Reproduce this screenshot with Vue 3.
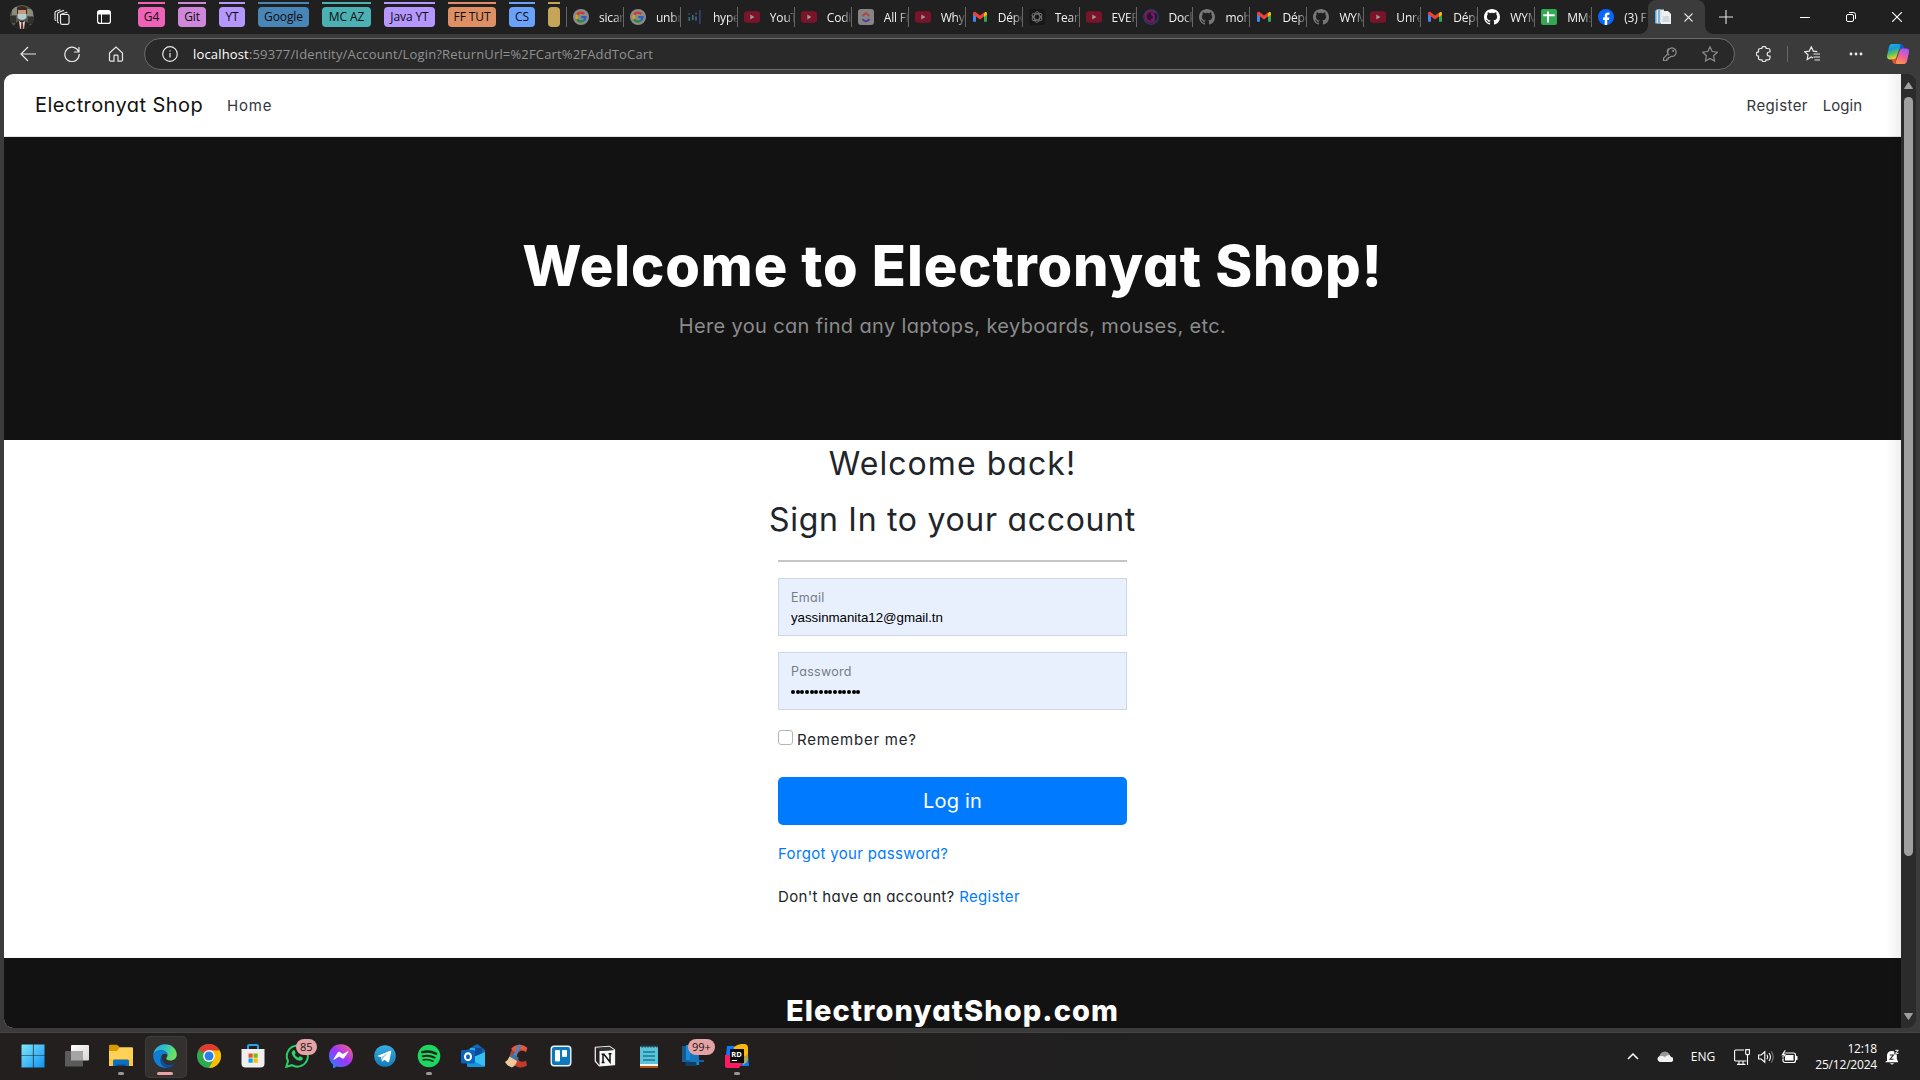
<script setup>
const groups = [
  { name: 'G4', color: '#f062b8', width: 27, gap: 13 },
  { name: 'Git', color: '#cf87da', width: 28, gap: 13 },
  { name: 'YT', color: '#b697ff', width: 26, gap: 13 },
  { name: 'Google', color: '#4986b8', width: 51, gap: 13 },
  { name: 'MC AZ', color: '#4bb1b4', width: 49, gap: 13 },
  { name: 'Java YT', color: '#b697ff', width: 51, gap: 13 },
  { name: 'FF TUT', color: '#df8f64', width: 48, gap: 13 },
  { name: 'CS', color: '#6aa1fa', width: 26, gap: 13 },
  { name: '', color: '#c4a55a', width: 12, gap: 6 },
]

const icons = {
  google: '<circle cx="8" cy="8" r="8" fill="#8b8b8b"/><g fill="none" stroke-width="2.3"><path d="M11.2 4.9A4.5 4.5 0 0 0 4.1 5.8" stroke="#d0392e"/><path d="M4.1 5.8a4.5 4.5 0 0 0 0 4.4" stroke="#dca30c"/><path d="M4.1 10.2a4.5 4.5 0 0 0 6.9 1.2" stroke="#268a42"/><path d="M11 11.4A4.5 4.5 0 0 0 12.5 8.2H8.2" stroke="#2b5fc0"/></g>',
  hyper: '<g><rect x="1.5" y="4" width="1.6" height="2" fill="#265462"/><rect x="1.5" y="8" width="1.6" height="4" fill="#31707e"/><rect x="5" y="6" width="1.6" height="5" fill="#367785"/><rect x="8" y="3.5" width="2" height="2" fill="#34496d"/><rect x="8" y="7.5" width="2" height="4" fill="#3e5789"/><rect x="12" y="1" width="1.7" height="14" fill="#38406e"/></g>',
  youtube: '<rect y="2.3" width="16" height="11.4" rx="3" fill="#7b1429"/><path d="M6.3 5.6 10.4 8 6.3 10.4z" fill="#999"/>',
  clickup: '<rect width="16" height="16" rx="3" fill="#858585"/><path d="M4.5 7 8 4l3.5 3" fill="none" stroke="#b2453d" stroke-width="1.8"/><path d="M4.4 10.2q3.6 4 7.2 0" fill="none" stroke="#553ba5" stroke-width="2"/>',
  gmail: '<path d="M1 4.5v8.3h3V6.8z" fill="#4285f4"/><path d="M12 6.8v6h3V4.5z" fill="#34a853"/><path d="M12 4.2 13 3q2-.5 2 1.200v1.500l-3 2.200z" fill="#fbbc04"/><path d="M1 5.2V3.7Q2 2.2 3.5 3L8 6.4 12 3.4v4L8 10.4z" fill="#ea4335"/>',
  gpt: '<rect width="16" height="16" rx="3" fill="#171717"/><g fill="none" stroke="#777" stroke-width=".9"><ellipse cx="8" cy="8" rx="2.8" ry="5.4"/><ellipse cx="8" cy="8" rx="2.8" ry="5.4" transform="rotate(60 8 8)"/><ellipse cx="8" cy="8" rx="2.8" ry="5.4" transform="rotate(120 8 8)"/></g>',
  docs: '<circle cx="8" cy="8" r="7.200" fill="#2c1532" stroke="#283b76" stroke-width="1.4"/><path d="M12 4A5.4 5.4 0 1 0 12 11" fill="none" stroke="#7a1a50" stroke-width="2.4"/><path d="M8 5a3 3 0 0 1 0 6" fill="none" stroke="#722169" stroke-width="1.8"/>',
  github: '<path fill="currentColor" fill-rule="evenodd" d="M8 0C3.58 0 0 3.58 0 8c0 3.54 2.29 6.53 5.47 7.59.4.07.55-.17.55-.38 0-.19-.01-.82-.01-1.49-2.01.37-2.53-.49-2.69-.94-.09-.23-.48-.94-.82-1.13-.28-.15-.68-.52-.01-.53.63-.01 1.08.58 1.23.82.72 1.21 1.87.87 2.33.66.07-.52.28-.87.51-1.07-1.78-.2-3.64-.89-3.64-3.95 0-.87.31-1.59.82-2.15-.08-.2-.36-1.02.08-2.12 0 0 .67-.21 2.2.82a7.6 7.6 0 0 1 4 0c1.53-1.04 2.2-.82 2.2-.82.44 1.1.16 1.92.08 2.12.51.56.82 1.27.82 2.15 0 3.07-1.87 3.75-3.65 3.95.29.25.54.73.54 1.48 0 1.07-.01 1.93-.01 2.2 0 .21.15.46.55.38A8.01 8.01 0 0 0 16 8c0-4.42-3.58-8-8-8z"/>',
  sheets: '<rect width="16" height="16" rx="2" fill="#34a853"/><path d="M2.3 6.3h11.4M7 2.5v11" stroke="#fff" stroke-width="2"/>',
  facebook: '<circle cx="8" cy="8" r="8" fill="#0866ff"/><path d="M6.7 15.9v-5H5V8.5h1.7V7c0-2.4 1.2-3.6 3.3-3.6q.9 0 1.5.2v2.1h-1c-1 0-1.3.5-1.3 1.4v1.4h2.2l-.4 2.4H9.2v5z" fill="#fff"/>',
}

const tabs = [
  ['google', 'sicar'], ['google', 'unbr'], ['hyper', 'hype'], ['youtube', 'YouT'], ['youtube', 'Codi'],
  ['clickup', 'All Fi'], ['youtube', 'Why'], ['gmail', 'Dépô'], ['gpt', 'Team'], ['youtube', 'EVER'],
  ['docs', 'Dock'], ['github', 'moh'], ['gmail', 'Dépô'], ['github', 'WYM'], ['youtube', 'Unre'],
  ['gmail', 'Dépô'], ['github', 'WYM', true], ['sheets', 'MMs'], ['facebook', '(3) F'],
].map(([icon, title, lit]) => ({ icon, title, lit }))

const apps = [
  { id: 'start', art: '<defs><linearGradient id="gw" x2="1" y2="1"><stop stop-color="#7ce8fb"/><stop offset="1" stop-color="#1291f2"/></linearGradient></defs><path fill="url(#gw)" d="M1 .5h10.9v10.9H.5V1zM12.6.5h10.9v10.9H12.6zM.5 12.1h11.4V23.5H.5zM12.6 12.1h10.9v11.4H12.6z"/>' },
  { id: 'task-view', art: '<defs><linearGradient id="gt" x2="1" y2="1"><stop stop-color="#fff"/><stop offset="1" stop-color="#d6d6d6"/></linearGradient></defs><rect x="6" y="1" width="18" height="15.5" rx="1" fill="url(#gt)"/><rect x="0" y="7" width="18" height="15.5" rx="1" fill="#5b5b5b"/><path d="M6 7h11a1 1 0 0 1 1 1v8.500H6z" fill="#a5a5a5"/>' },
  { id: 'explorer', run: true, art: '<path d="M0 2q0-1.200 1.200-1.200H8L10.500 3v4H0z" fill="#d99a00"/><path d="M0 7h8l2.500-3.800H23q1 0 1 1V22H0z" fill="#ffd155"/><path d="M0 15h24v6q0 1-1 1H1q-1 0-1-1z" fill="#fdc22e" opacity=".6"/><path d="M4 22v-5q0-1.500 1.500-1.500h13Q20 15.500 20 17v5z" fill="#0f6fbe"/><path d="M7.500 20.500h9V22h-9z" fill="#0a4a86"/>' },
  { id: 'edge', active: true, art: '<defs><linearGradient id="ge" x2="1" y2=".3"><stop stop-color="#2aa6dc"/><stop offset=".5" stop-color="#2cc3c8"/><stop offset="1" stop-color="#6be35d"/></linearGradient></defs><path d="M.2 11C1 4.500 6 .2 12 .2c7 0 11.800 5 11.800 10.300 0 3.700-2.800 6-6.300 6-3 0-4.300-1.200-4.300-2 0-.7 1.300-1.200 1.300-3.500C14.500 8 11 6.200 8 6.200 4 6.200 1 8.500.2 11z" fill="url(#ge)"/><path d="M.2 11C1.300 8 4.600 6.200 8 6.200c3.300 0 6.500 2 6.500 4.800-3.500-3.400-8.200.7-6.300 6 1 2.800 3.300 5.200 6.300 6.600C7 25.200 0 19.500.2 11z" fill="#0f7fd6"/><path d="M10.200 11.800c-3 3.200.4 9.400 6.600 9.200 2 0 3.800-.8 5.200-2-1.800 3-5 5-8.500 4.800-6.500-1.500-8.400-8.800-3.300-12z" fill="#0c4f9e"/>' },
  { id: 'chrome', art: '<circle cx="12" cy="12" r="12" fill="#2da94f"/><path d="M12 12 1.600 6A12 12 0 0 1 22.400 6z" fill="#e33b2e"/><path d="M12 6.500h10.700A12 12 0 0 1 12 24l5-9z" fill="#fdbd00"/><circle cx="12" cy="12" r="5.900" fill="#fff"/><circle cx="12" cy="12" r="4.500" fill="#2b7de9"/>' },
  { id: 'store', art: '<path d="M7 5V2.200Q7 1 8.200 1h7.600Q17 1 17 2.200V5" fill="none" stroke="#21a4e8" stroke-width="2"/><path d="M.5 5h23v14.500q0 4-4 4h-15q-4 0-4-4z" fill="#efefef"/><path d="M7.500 9.500h4.200v4.200H7.500z" fill="#f25022"/><path d="M12.500 9.500h4.200v4.200h-4.200z" fill="#7fba00"/><path d="M7.500 14.500h4.200v4.200H7.500z" fill="#00a4ef"/><path d="M12.500 14.500h4.200v4.200h-4.200z" fill="#ffb900"/>' },
  { id: 'whatsapp', badge: '85', art: '<path d="M1.300 22.800 3 17A10.500 10.500 0 1 1 7 21.200z" fill="none" stroke="#25d366" stroke-width="2"/><path d="M8.500 6.200c-.6 0-1.800.9-1.800 2.500 0 2.700 4.300 8 8.200 8 1.700 0 3-1.100 3-2.300 0-.9-2.600-2.200-3.100-2.100-.6.100-1 1.400-1.500 1.400-1 0-3.500-2.500-3.500-3.200 0-.5.900-.9.900-1.500 0-.5-1-2.800-1.400-2.800z" fill="#25d366"/>' },
  { id: 'messenger', art: '<defs><linearGradient id="gm" x1="0" y1="1" x2="1" y2="0"><stop stop-color="#168bff"/><stop offset=".5" stop-color="#a033ff"/><stop offset="1" stop-color="#ff6c68"/></linearGradient></defs><path d="M12 .2c7 0 12 5 12 11.500S19 23 12 23c-1.500 0-2.800-.2-4-.6l-3 1.500c-.5.200-1 0-1-.7v-2.600C1.500 18.500 0 15.400 0 11.700 0 5 5 .2 12 .2z" fill="url(#gm)"/><path d="m4.500 15 4.200-6.500q1-1.200 2.200-.4l2.800 2 5.300-2.800q.8-.2.300.7L15.200 14q-1 1.300-2.300.3l-2.700-1.900L5 15.800q-.8.200-.5-.8z" fill="#fff"/>' },
  { id: 'telegram', art: '<defs><linearGradient id="gg" x2="0" y2="1"><stop stop-color="#37aee2"/><stop offset="1" stop-color="#127cb8"/></linearGradient></defs><circle cx="12" cy="12" r="10.800" fill="url(#gg)"/><path d="m4.800 11.800 12.400-5q1.200-.3 1 1l-2 9.700q-.4 1.300-1.700.6l-3.200-2.400-1.700 1.700q-.7.500-.8-.6L8 13.200l-3.200-.9q-.6-.3 0-.5z" fill="#fff"/><path d="m8.200 13.200 7.300-4.700-5.300 5.400-.7 2.700z" fill="#9fc9e3"/>' },
  { id: 'spotify', run: true, art: '<circle cx="12" cy="12" r="11.300" fill="#1ed760"/><g fill="none" stroke="#14251a" stroke-linecap="round"><path d="M5.200 8.200q7.300-2 14 1.500" stroke-width="2.400"/><path d="M5.800 12.200q6-1.600 11.800 1.400" stroke-width="2"/><path d="M6.300 15.900q5-1.200 9.600 1.300" stroke-width="1.700"/></g>' },
  { id: 'outlook', art: '<path d="m6 6 9-5.500q1-.6 2 0L24 6v6H6z" fill="#1066b5"/><path d="M9 4h10v9H9z" fill="#28a8ea"/><path d="M14 4h7v8h-7z" fill="#0b4a96"/><path d="M24 8v13q0 2-2 2H8q-2 0-2-2v-5z" fill="#36c0f2"/><path d="M6 14l18 8.500q-1 .5-2 .5H8q-2 0-2-2z" fill="#1893df"/><rect y="6" width="14" height="13.500" rx="1.500" fill="#0a64bb"/><ellipse cx="7" cy="12.700" rx="3" ry="3.500" fill="none" stroke="#fff" stroke-width="2"/>' },
  { id: 'ccleaner', art: '<path d="M22.500 4A11 11 0 1 0 22 21.500l-1-5a5.500 5.500 0 1 1 0-8.500z" fill="#c43a2c"/><path d="M22 3.500A11 11 0 0 0 6 5l4 3q5-5 11 0z" fill="#df5745"/><path d="M14.500.5q2 0 1 2.500L11 12.500 8.500 11 12.500 2z" fill="#438ac1"/><path d="m7 9.500 7 4.500-2.500 3L4.500 13z" fill="#3b75a7"/><path d="M4.500 12.500 12 17q-1 4-5 6.500Q2 22 0 18q3-1.500 4.500-5.500z" fill="#edc99b"/>' },
  { id: 'trello', art: '<rect x="2.200" y="2.200" width="19.600" height="19.600" rx="3" fill="#0b79bf" stroke="#eef5fa" stroke-width="1.400"/><rect x="6" y="6" width="5" height="11.500" rx="1" fill="#fff"/><rect x="13" y="6" width="5" height="7" rx="1" fill="#fff"/>' },
  { id: 'notion', art: '<path d="m2.300 3.500 14-1.200 5.200 3.400v15l-15.200 1.200-4-4.600z" fill="#252222" stroke="#e8e8e8" stroke-width="1.300" stroke-linejoin="round"/><path d="m6.500 7 15-1v14.700l-15 1.200z" fill="#f8f8f8"/><path d="M6.500 7 2.500 3.700l13.800-1L21 6z" fill="#333"/><path d="M10 18.500v-8l1-.2 6 7.700V9.500M8.600 10.300h3M8.600 18.600h3M15.500 9.700h3" fill="none" stroke="#111" stroke-width="1.500"/>' },
  { id: 'notepad', art: '<rect x="3" y="2.500" width="18" height="18.500" fill="#5cc3d9"/><path d="M3 20h18v2H3z" fill="#f4f4f4"/><path d="M3 22h18v2H3z" fill="#b1530d"/><path d="M5 .5v3M8 .5v3M11 .5v3M14 .5v3M17 .5v3M20 .5v3" stroke="#173e4a" stroke-width="1.400"/><path d="M6 8h12M6 12h12M6 16h12" stroke="#167b9c" stroke-width="1.700"/>' },
  { id: 'phone', badge: '99+', art: '<path d="M1 2h7v15H1z" fill="#18588d"/><path d="M5 1h13v20H5z" fill="#168bd8"/><path d="M1 16h22v2H1z" fill="#1462a0"/><path d="M9 5h9v13H9z" fill="#1675bb"/><path d="M4.500 18h11v4h-11z" fill="#123e64"/>' },
  { id: 'rider', run: true, art: '<path d="M2 2h7l4 8-8 6-4-5z" fill="#087cfa"/><path d="M9 3q4-3.500 10-3 4 0 4 4v9L8 10z" fill="#fdb60d"/><path d="M18 15l5-5 1 12h-8z" fill="#087cfa"/><path d="M19 8h4v8q-1 3-5 5z" fill="#fdb60d" opacity=".7"/><path d="M0 11h7l10 9-3 4H2q-2 0-2-2z" fill="#ff1b63"/><rect x="5" y="5" width="14" height="14" fill="#080808"/><path d="M6.800 16.500h5.200" stroke="#fff"/><text x="6.200" y="12.500" font-size="7.500" font-family="Open Sans, sans-serif" font-weight="700" fill="#fff">RD</text>' },
]
</script>

<template>
  <div class="screen">
    <header class="strip">
      <svg class="avatar" viewBox="0 0 24 24"><defs><clipPath id="av"><circle cx="12" cy="12" r="12" /></clipPath></defs><g clip-path="url(#av)"><path fill="#56574d" d="M0 0h24v24H0z" /><path fill="#8c8b7b" d="M2 2h5v8H2zM17 4h6v7h-6z" /><path fill="#30332c" d="M0 11h6v7H0zM18 12h6v7h-6z" /><path fill="#3b2a20" d="M7 3q5-4 10 0v6H7z" /><path fill="#c89a7c" d="M8 5h8v7H8z" /><path fill="#b4cbd0" d="M7.500 9h9v4q-4.500 4-9 0z" /><path fill="#26231f" d="M3 24q1-8 9-8t9 8z" /><path fill="#ddd" d="m9 16 3 2 3-2-1 8h-4z" /><path fill="#7a2322" d="M11.300 18h1.600l.5 6h-2.600z" /></g></svg>
      <svg class="work" viewBox="0 0 16 16" fill="none" stroke="#e6e6e6" stroke-width="1.200"><path d="M6.500 5.500 12 3.500q1-.3 1 .7M6.500 5.500v8.300q0 1.500 1.500 1.500h5.500q1.500 0 1.500-1.500V7q0-1.500-1.500-1.500z" /><path d="M3.500 12.500V5.200q0-1.200 1-1.700L10 1.200M1 10.300V4q0-1.200 1-1.700L6.500.8" /><path d="M3.500 12.500q0 1 1.200 1.300M1 10.300q0 1 1.200 1.200" /></svg>
      <svg class="vtabs" viewBox="0 0 14 14"><rect x=".6" y=".6" width="12.800" height="12.800" rx="2.200" fill="none" stroke="#fff" stroke-width="1.200" /><path d="M1 1h12v3.500H1z" fill="#fff" /><path d="M4.500 4v9" stroke="#fff" /></svg>
      <div class="groups">
        <span v-for="g in groups" :key="g.name" class="group" :style="{ '--c': g.color, width: g.width + 'px', marginRight: g.gap + 'px' }"><b>{{ g.name }}</b></span>
      </div>
      <div class="tabs">
        <div v-for="(t, i) in tabs" :key="i" class="tab">
          <svg viewBox="0 0 16 16" :class="{ lit: t.lit }" v-html="icons[t.icon]" />
          <span>{{ t.title }}</span>
        </div>
      </div>
      <div class="tab-active">
        <svg class="page-ico" viewBox="0 0 16 16"><path d="M0 1.500 5 1v13l-5 .5z" fill="#5fa8d8" /><path d="M1.500.5H9v14H1.500z" fill="#dfe5ea" /><path d="M3 0h2v14H3z" fill="#78b5dc" /><path d="M7 2h6l3 3v10H6z" fill="#eef1f3" /><path d="M7.500 10h7M7.500 12h7M8 8h6" stroke="#b9c0c6" /></svg>
        <svg class="x" viewBox="0 0 9 9"><path d="m.5.5 8 8m0-8-8 8" stroke="#ddd" stroke-width="1.100" /></svg>
      </div>
      <svg class="plus" viewBox="0 0 14 14"><path d="M7 0v14M0 7h14" stroke="#e4e4e4" stroke-width="1.100" /></svg>
      <div class="controls">
        <svg viewBox="0 0 10 10"><path d="M0 5.500h10" stroke="#fff" /></svg>
        <svg viewBox="0 0 10 10" fill="none" stroke="#fff"><rect x=".5" y="2.500" width="7" height="7" rx="1.500" /><path d="M3 .5h4.500q2 0 2 2V7" /></svg>
        <svg viewBox="0 0 10 10"><path d="m0 0 10 10m0-10L0 10" stroke="#fff" stroke-width="1.100" /></svg>
      </div>
    </header>

    <div class="toolbar">
      <svg class="i16 back" viewBox="0 0 16 16"><path d="M16 8H1m7-7L1 8l7 7" /></svg>
      <svg class="i16 reload" viewBox="0 0 16 16"><path d="M14.800 6A7.200 7.200 0 1 0 15.200 8M15 1v5h-5" /></svg>
      <svg class="i16 home" viewBox="0 0 16 16"><path d="M1.500 7 8 1l6.500 6v7q0 1.200-1.200 1.200H10V10q0-.8-.8-.8H6.800Q6 9.200 6 10v5.200H2.700q-1.200 0-1.200-1.200z" /></svg>
      <div class="address">
        <svg class="i16 info" viewBox="0 0 16 16"><circle cx="8" cy="8" r="7.300" /><path d="M8 7v4.500M8 4.300v1.300" /></svg>
        <span class="url"><b>localhost</b>:59377/Identity/Account/Login?ReturnUrl=%2FCart%2FAddToCart</span>
        <svg class="i16 dim key" viewBox="0 0 16 16"><path d="M7 9.200A4.200 4.200 0 1 1 9 10.300L7.800 11.500H6.300V13H4.800v1.500H1.500v-2.300L6 7.700a4 4 0 0 1 1-5.200" /><circle cx="11.200" cy="4.800" r=".5" /></svg>
        <svg class="i16 dim star" viewBox="0 0 16 16"><path d="m8 .8 2.200 4.700 5.200.7-3.800 3.600.9 5.200L8 12.500 3.500 15l.9-5.200L.6 6.200l5.200-.7z" /></svg>
      </div>
      <svg class="i16 ext" viewBox="0 0 16 16"><path d="M5.800 2.500a2.200 2.200 0 0 1 4.400 0h2q1.800 0 1.800 1.800V6h-.8a2 2 0 0 0 0 4h.8v2q0 1.800-1.800 1.800H10a2 2 0 0 1-4 0H4.300q-1.800 0-1.800-1.800v-1.800a2.200 2.200 0 0 1 0-4.400V4.300q0-1.800 1.800-1.800z" /></svg>
      <i class="sep" />
      <svg class="i16 fav" viewBox="0 0 16 16"><path d="M9 12 7.200 11 3.200 13.500l.8-4.700L.6 5.700l4.700-.6L7.300.8l2 4.300 4 .5M9.500 8H16M9.500 11H16M10.500 14H16" /></svg>
      <svg class="dots" viewBox="0 0 14 4" fill="#eee"><circle cx="2" cy="2" r="1.400" /><circle cx="7" cy="2" r="1.400" /><circle cx="12" cy="2" r="1.400" /></svg>
      <svg class="copilot" viewBox="0 0 22 20"><defs><linearGradient id="c1" x2=".3" y2="1"><stop stop-color="#1fb5f5" /><stop offset=".4" stop-color="#169ad0" /><stop offset=".7" stop-color="#5fc458" /><stop offset="1" stop-color="#f3ce27" /></linearGradient><linearGradient id="c2" x1=".6" x2=".2" y2="1"><stop stop-color="#a855f7" /><stop offset=".5" stop-color="#f0609a" /><stop offset="1" stop-color="#ff9a3d" /></linearGradient></defs><path d="M11 0h3q2 0 2.800 3l.7 2.500H12z" fill="#1558c8" /><path d="M4.500 0H12q2 0 1.200 2.500L9.500 13q-.7 2.500-3 2.500H3q-4 0-2.700-5L2 3Q2.700 0 4.500 0z" fill="url(#c1)" /><path d="M17.500 20H10q-2 0-1.200-2.500L12.500 7q.7-2.500 3-2.500H19q4 0 2.700 5L20 17q-.7 3-2.500 3z" fill="url(#c2)" /><path d="M11 20H8q-2 0-2.800-3l-.5-1.500q4 .5 5-2.500l-1 4.500Q8 20 11 20z" fill="#e2503b" /></svg>
    </div>

    <div class="frame">
      <main class="page">
        <nav class="nav">
          <a class="brand">Electronyat Shop</a>
          <a class="link first">Home</a>
          <a class="link reg">Register</a>
          <a class="link log">Login</a>
        </nav>
        <section class="hero">
          <h1>Welcome to Electronyat Shop!</h1>
          <p>Here you can find any laptops, keyboards, mouses, etc.</p>
        </section>
        <section class="login">
          <h2>Welcome back!</h2>
          <h2 class="second">Sign In to your account</h2>
          <form>
            <hr>
            <div class="field"><label>Email</label><span class="value">yassinmanita12@gmail.tn</span></div>
            <div class="field"><label>Password</label><span class="pw"><i v-for="n in 15" :key="n" /></span></div>
            <div class="remember"><i class="box" /><span>Remember me?</span></div>
            <div class="btn">Log in</div>
            <p class="forgot"><a>Forgot your password?</a></p>
            <p class="signup">Don't have an account? <a>Register</a></p>
          </form>
        </section>
        <footer>ElectronyatShop.com</footer>
      </main>
      <div class="scroll">
        <svg class="arrow" viewBox="0 0 9 7"><path d="M4.500.5 8.500 6.500H.5z" fill="#9f9f9f" stroke="#9f9f9f" stroke-linejoin="round" /></svg>
        <i class="thumb" />
        <svg class="arrow" viewBox="0 0 9 7"><path d="M4.500 6.500 8.500.5H.5z" fill="#9f9f9f" stroke="#9f9f9f" stroke-linejoin="round" /></svg>
      </div>
    </div>

    <div class="taskbar">
      <div class="apps">
        <div v-for="a in apps" :key="a.id" class="app" :class="{ active: a.active, run: a.run }">
          <svg viewBox="0 0 24 24" v-html="a.art" />
          <span v-if="a.badge" class="badge" :class="{ wide: a.badge.length > 2 }">{{ a.badge }}</span>
        </div>
      </div>
      <div class="tray">
        <svg class="chev" viewBox="0 0 12 7"><path d="m1 6 5-5 5 5" fill="none" stroke="#fff" stroke-width="1.500" /></svg>
        <svg class="cloud" viewBox="0 0 16 11"><path d="M2.500 5A5.500 5.500 0 0 1 12.500 3L14 7H3z" fill="#999" /><path d="M3 11a3 3 0 0 1-.5-5.800Q5 4 7.500 6l3-1.800Q13 3.500 14 6a2.500 2.500 0 0 1-.5 5z" fill="#f2f2f2" /></svg>
        <span class="lang">ENG</span>
        <svg class="net" viewBox="0 0 16 16" fill="none" stroke="#fff" stroke-width="1.100"><path d="M10 1H1.600Q.6 1 .6 2v9q0 1 1 1h10.800M5 12v3m4-3v3M3 15.400h8.500" /><path d="M11.700.6h3.700v4q0 1-1 1h-1.700q-1 0-1-1zM13.500 5.600V16" /></svg>
        <svg class="vol" viewBox="0 0 16 14" fill="none" stroke="#fff" stroke-width="1.100"><path d="M.6 5v4h2.600l3.600 3.200V1.800L3.200 5z" /><path d="M9 4.800q1.500 2.200 0 4.400M11 3q3 4 0 8" /><path d="M13.200 1.200q4 5.800 0 11.600" stroke="#777" /></svg>
        <svg class="bat" viewBox="0 0 17 14"><rect x="2" y="3" width="12.500" height="9.500" rx="2" fill="none" stroke="#fff" stroke-width="1.200" /><path d="M4 5h8.500v5.500H4zM15 6h1.500v4H15z" fill="#fff" /><path d="M3.500 0 0 5.500h2.500L1.500 9l4-5H3.300L5 0z" fill="#fff" stroke="#222" stroke-width=".5" /></svg>
        <div class="clock"><span>12:18</span><span>25/12/2024</span></div>
        <svg class="bell" viewBox="0 0 14 16"><path d="M2 12V6.500Q2.200 2 7 2q4.500 0 4.800 4.500V10l1.200 2.500v.8H.5v-.8z" fill="#fff" /><path d="M5 14.300h4q-2 2.500-4 0z" fill="#fff" /><path d="M4.800 6h3.600L5 10.200h3.600" fill="none" stroke="#222" stroke-width="1.100" /><path d="M9.300 0H14v5.300H9.300z" fill="#222" /><path d="M10.300 1.300h3L10.500 4.300h3" fill="none" stroke="#fff" /></svg>
      </div>
    </div>
  </div>
</template>

<style>
html, body { margin: 0; background: #3b3b3b; overflow: hidden; }
</style>

<style scoped>
* { box-sizing: border-box; }
.screen { width: 1920px; height: 1080px; display: flex; flex-direction: column; background: #3b3b3b; font-family: "Open Sans", "Noto Sans", sans-serif; font-size: 12px; white-space: nowrap; overflow: hidden; }
svg { display: block; flex: none; }
.strip { height: 34px; background: #202020; display: flex; align-items: center; }
.avatar { width: 24px; height: 24px; margin-left: 10px; }
.work { width: 16px; height: 16px; margin-left: 20px; }
.vtabs { width: 14px; height: 14px; margin-left: 27px; }
.groups { display: flex; margin-left: 27px; height: 34px; }
.group { flex: none; height: 27px; display: flex; padding-top: 7px; color: #0c0c0c; background: linear-gradient(var(--c), var(--c)) 0 2px / 100% 2px no-repeat; }
.group b { font-weight: 400; background: var(--c); width: 100%; height: 20px; border-radius: 4px; line-height: 19px; text-align: center; letter-spacing: -.1px; }
.tabs { display: flex; width: 1082px; height: 34px; align-items: center; }
.tab { flex: 1 1 0; min-width: 0; height: 20px; display: flex; align-items: center; border-left: 1px solid #666; padding-left: 6px; color: #f1f1f1; overflow: hidden; }
.tab svg { width: 16px; height: 16px; color: #777; }
.tab svg.lit { color: #fff; }
.tab span { margin-left: 10px; width: 24px; flex: none; overflow: hidden; letter-spacing: -.2px; mask-image: linear-gradient(90deg, #000 62%, rgba(0,0,0,.15)); }
.tab-active { width: 57px; height: 34px; background: #3b3b3b; border-radius: 8px 8px 0 0; display: flex; align-items: center; padding-left: 7px; position: relative; }
.tab-active::before, .tab-active::after { content: ""; position: absolute; bottom: 0; width: 8px; height: 8px; }
.tab-active::before { left: -8px; background: radial-gradient(circle at 0 0, transparent 7.500px, #3b3b3b 8px); }
.tab-active::after { right: -8px; background: radial-gradient(circle at 100% 0, transparent 7.500px, #3b3b3b 8px); }
.page-ico { width: 16px; height: 16px; }
.x { width: 9px; height: 9px; margin-left: 13px; }
.plus { width: 14px; height: 14px; margin-left: 14px; }
.controls { display: flex; gap: 36px; margin-left: 67px; }
.controls svg { width: 10px; height: 10px; }
.toolbar { height: 40px; display: flex; align-items: center; background: #3b3b3b; }
.i16 { width: 16px; height: 16px; fill: none; stroke: #e8e8e8; stroke-width: 1.200; }
.back { margin-left: 20px; } .reload { margin-left: 28px; } .home { margin-left: 28px; }
.address { margin-left: 20px; width: 1591px; height: 32px; border: 1px solid #6b6b6b; border-radius: 16px; background: #292929; display: flex; align-items: center; padding: 0 16px 0 17px; }
.url { margin-left: 15px; color: #929292; font-size: 13px; letter-spacing: .16px; }
.url b { color: #fff; font-weight: 400; }
.dim { stroke: #8e8e8e; }
.key { margin-left: auto; } .star { margin-left: 24px; }
.ext { margin-left: 21px; }
.sep { width: 1px; height: 16px; background: #666; margin-left: 15px; }
.fav { margin-left: 16px; }
.dots { width: 14px; height: 4px; margin-left: 29px; }
.copilot { width: 22px; height: 20px; margin-left: 24px; }
.frame { height: 954px; margin: 0 4px; display: flex; border-radius: 9px; overflow: hidden; background: #2b2b2b; }
.page { width: 1897px; height: 954px; background: #fff; overflow: hidden; font-family: Inter, "Open Sans", sans-serif; font-feature-settings: "cv11"; color: #212529; position: relative; }
.page::after { content: ""; position: absolute; right: 0; top: 0; width: 16px; height: 100%; background: linear-gradient(90deg, transparent, rgba(0,0,0,.06)); }
.nav { height: 63px; border-bottom: 1px solid #dfe5e6; display: flex; align-items: center; padding: 0 39px 0 31px; }
.brand { font-size: 20px; color: #111; letter-spacing: .42px; }
.link { font-size: 15px; color: #34373b; letter-spacing: .4px; }
.first { margin-left: 24px; letter-spacing: .75px; }
.reg { margin-left: auto; } .log { margin-left: 15px; letter-spacing: 0; }
.hero { height: 303px; background: #121212; text-align: center; padding-top: 95px; color: #fff; }
.hero h1 { margin: 0; font-size: 56px; line-height: 68px; font-weight: 800; letter-spacing: .9px; }
.hero p { margin: 11px 0 0; font-size: 20px; line-height: 30px; color: #8b8b8b; letter-spacing: .35px; }
.login { height: 518px; display: flex; flex-direction: column; align-items: center; }
.login h2 { margin: 4px 0 0; font-size: 32px; line-height: 40px; font-weight: 400; letter-spacing: 1.05px; }
.login .second { margin-top: 16px; letter-spacing: .7px; }
form { width: 349px; }
hr { border: 0; height: 2px; background: #c5c5c5; margin: 20px 0 16px; }
.field { height: 58px; border: 1px solid #ccd6e6; background: #e8f0fe; margin-bottom: 16px; padding: 10px 12px; display: flex; flex-direction: column; }
label { font-size: 12.500px; line-height: 18px; color: #767c85; letter-spacing: .3px; }
.value { font: 13.333px/20px "Liberation Sans", sans-serif; color: #000; margin-top: 1px; letter-spacing: -.04px; }
.pw { display: flex; gap: .67px; margin-top: 9px; }
.pw i { width: 4px; height: 4px; border-radius: 50%; background: #000; }
.remember { display: flex; align-items: center; height: 20px; margin-top: 18px; font-size: 15px; letter-spacing: .75px; }
.remember span { padding-top: 2px; }
.box { width: 15px; height: 15px; border: 1px solid #b5b5b5; border-radius: 3px; margin: 0 4px 1px 0; }
.btn { height: 48px; margin-top: 29px; background: #007bff; border-radius: 5px; color: #fff; font-size: 20px; line-height: 48px; text-align: center; letter-spacing: .2px; }
.forgot, .signup { margin: 18px 0 0; font-size: 15px; line-height: 22px; white-space: pre; letter-spacing: .33px; }
.signup { margin-top: 21px; }
form a { color: #007bff; }
footer { height: 80px; background: #121212; color: #fff; text-align: center; font-size: 29px; font-weight: 800; line-height: 106px; letter-spacing: 1.1px; overflow: hidden; }
.scroll { width: 15px; background: #2b2b2b; display: flex; flex-direction: column; align-items: center; padding: 8px 0; }
.arrow { width: 9px; height: 7px; }
.thumb { width: 9px; height: 759px; margin: 8px 0 auto; border-radius: 5px; background: #9f9f9f; }
.taskbar { margin-top: 4px; height: 48px; border-top: 1px solid #464443; display: flex; justify-content: space-between; color: #fff; background: linear-gradient(90deg, #231f1f 45%, #202020 60%); }
.apps { display: flex; padding-left: 11px; }
.app { width: 44px; height: 47px; display: flex; justify-content: center; padding-top: 11px; position: relative; }
.app svg { width: 24px; height: 24px; }
.app.active::before { content: ""; position: absolute; left: 2px; top: 3px; width: 40px; height: 40px; border-radius: 5px; background: rgba(255,255,255,.08); border: 1px solid rgba(255,255,255,.06); }
.app.active svg { position: relative; }
.app.active::after { content: ""; position: absolute; bottom: 5px; width: 16px; height: 3px; border-radius: 2px; background: #e5a3a6; }
.app.run::after { content: ""; position: absolute; bottom: 5px; width: 6px; height: 3px; border-radius: 2px; background: #999; }
.badge { position: absolute; left: 21px; top: 6px; height: 16px; padding: 0 4px; border-radius: 8px; background: #e5a3a6; color: #171717; font-size: 11px; line-height: 16px; }
.badge.wide { left: 17px; }
.tray { display: flex; align-items: center; padding-right: 21px; }
.chev { width: 12px; height: 7px; }
.cloud { width: 16px; height: 11px; margin-left: 18px; }
.lang { margin-left: 18px; }
.net { width: 16px; height: 16px; margin-left: 19px; }
.vol { width: 16px; height: 14px; margin-left: 8px; }
.bat { width: 17px; height: 14px; margin-left: 7px; }
.clock { margin-left: 17px; display: flex; flex-direction: column; align-items: flex-end; line-height: 16px; letter-spacing: -.2px; }
.bell { width: 14px; height: 16px; margin-left: 8px; }
</style>
